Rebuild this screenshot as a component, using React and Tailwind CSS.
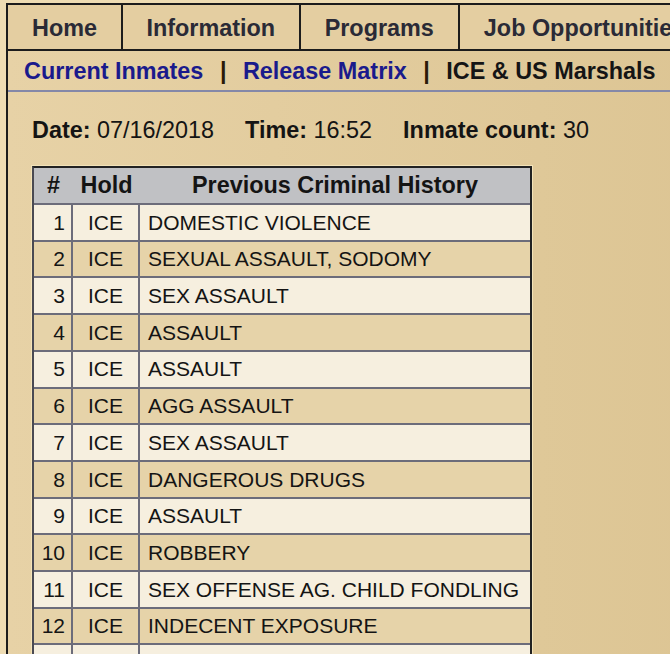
import React from "react";

const rows = [
  [1, "ICE", "DOMESTIC VIOLENCE"],
  [2, "ICE", "SEXUAL ASSAULT, SODOMY"],
  [3, "ICE", "SEX ASSAULT"],
  [4, "ICE", "ASSAULT"],
  [5, "ICE", "ASSAULT"],
  [6, "ICE", "AGG ASSAULT"],
  [7, "ICE", "SEX ASSAULT"],
  [8, "ICE", "DANGEROUS DRUGS"],
  [9, "ICE", "ASSAULT"],
  [10, "ICE", "ROBBERY"],
  [11, "ICE", "SEX OFFENSE AG. CHILD FONDLING"],
  [12, "ICE", "INDECENT EXPOSURE"],
];

export default function App() {
  return (
    <div
      className="w-[670px] h-[654px] overflow-hidden bg-[#eedcb3] pt-[3px] pl-[6px] text-[#111]"
      style={{ fontFamily: '"Liberation Sans", Arial, sans-serif' }}
    >
      <div className="w-[800px] h-[700px] border-l-2 border-t-2 border-[#1c1c1c] bg-gradient-to-r from-[#e7d2a6] to-[#dbc391]">
        {/* Tabs */}
        <div className="flex h-[46px] border-b-2 border-[#1c1c1c] bg-[#e4cea1] text-[23.4px] font-bold text-[#2a2a36]">
          <div className="flex items-center pt-[3px] px-[24px] border-r-2 border-[#1c1c1c]">Home</div>
          <div className="flex items-center pt-[3px] px-[23.5px] border-r-2 border-[#1c1c1c]">Information</div>
          <div className="flex items-center pt-[3px] px-[24px] border-r-2 border-[#1c1c1c]">Programs</div>
          <div className="flex items-center pt-[3px] px-[24px] border-r-2 border-[#1c1c1c]">Job Opportunities</div>
        </div>
        {/* Sub nav */}
        <div className="flex items-center h-[41px] pt-[3px] pl-[16px] border-b-2 border-[#8488a8] text-[23.4px] font-bold">
          <span className="text-[#1a1a8c]">Current Inmates</span>
          <span className="mx-[16.5px] text-[#2a1a08]">|</span>
          <span className="text-[#1a1a8c]">Release Matrix</span>
          <span className="mx-[16.5px] text-[#2a1a08]">|</span>
          <span className="text-[#151515]">ICE &amp; US Marshals</span>
        </div>
        {/* Content */}
        <div className="pl-[24px] pt-[25px]">
          <div className="flex gap-[31px] text-[23.4px] leading-[27px] text-[#141414]">
            <span><b>Date:</b> 07/16/2018</span>
            <span><b>Time:</b> 16:52</span>
            <span><b>Inmate count:</b> 30</span>
          </div>
          <div className="mt-[22px] w-[500px] outline outline-1 outline-[#f3e3b8]">
            <table
              className="w-[500px] table-fixed border-separate border-spacing-0 border-2 border-[#222] border-l-[#4a4a52] text-[21px] text-[#141414]"
            >
              <colgroup>
                <col className="w-[39px]" />
                <col className="w-[67px]" />
                <col />
              </colgroup>
              <thead>
                <tr className="bg-[#c0c1c4] h-[36px] text-[23.4px]">
                  <th className="font-bold text-center border-b-2 border-[#6c6c7a] p-0">#</th>
                  <th className="font-bold text-center border-b-2 border-[#6c6c7a] p-0 whitespace-nowrap overflow-hidden">Hold</th>
                  <th className="font-bold text-center border-b-2 border-[#6c6c7a] p-0 whitespace-nowrap">Previous Criminal History</th>
                </tr>
              </thead>
              <tbody>
                {rows.map(([n, h, c], i) => (
                  <tr key={n} className={i % 2 === 0 ? "bg-[#f6efdf] h-[36.7px]" : "bg-[#e6d3a9] h-[36.7px]"}>
                    <td className="text-right pr-[6px] border-r-2 border-b-2 border-[#6c6c7a] p-0">{n}</td>
                    <td className="text-center border-r-2 border-b-2 border-[#6c6c7a] p-0">{h}</td>
                    <td className="text-left pl-[8px] border-b-2 border-[#6c6c7a] whitespace-nowrap">{c}</td>
                  </tr>
                ))}
                <tr className="bg-[#f6efdf] h-[36.7px]">
                  <td className="border-r-2 border-b-2 border-[#6c6c7a] p-0"></td>
                  <td className="border-r-2 border-b-2 border-[#6c6c7a] p-0"></td>
                  <td className="border-b-2 border-[#6c6c7a]"></td>
                </tr>
              </tbody>
            </table>
          </div>
        </div>
      </div>
    </div>
  );
}
